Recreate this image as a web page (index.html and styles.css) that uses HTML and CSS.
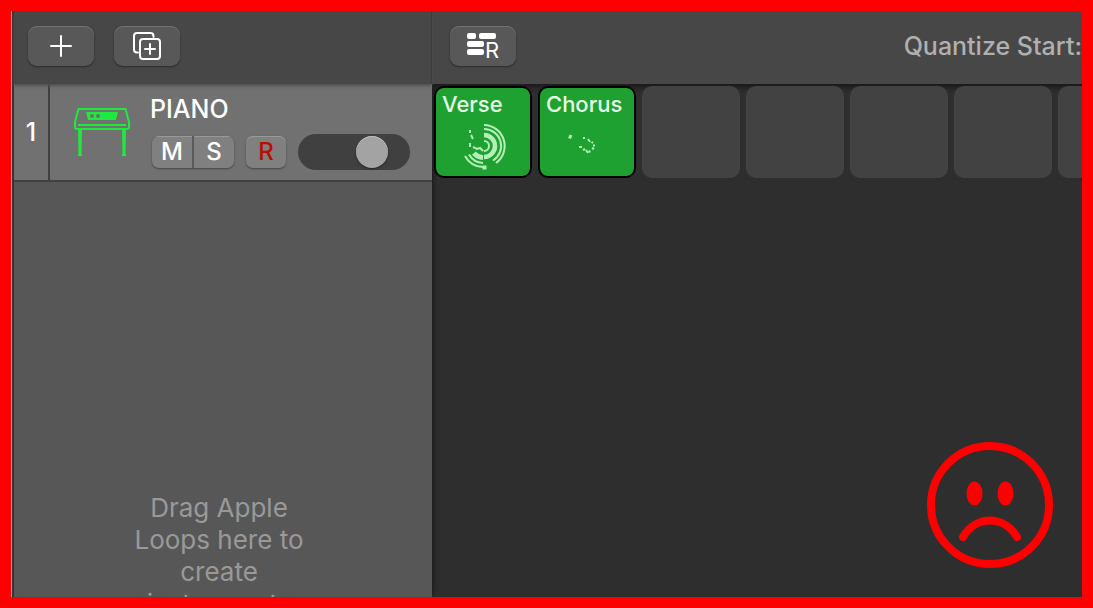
FILE: index.html
```
<!DOCTYPE html>
<html lang="en">
<head>
    <meta charset="UTF-8">
    <meta name="viewport" content="width=device-width, initial-scale=1.0">
    <title>Live Loops</title>
    <link rel="stylesheet" href="styles.css">
</head>
<body>

<div class="window">
    <aside class="tracks">
        <div class="toolbar">
            <button type="button" class="tool" aria-label="Add track">
                <svg width="22" height="22" viewBox="0 0 22 22" fill="none" stroke="#fff" stroke-width="2" stroke-linecap="round">
                    <path d="M11 1v20M1 11h20"/>
                </svg>
            </button>
            <button type="button" class="tool" aria-label="Duplicate track">
                <svg width="28" height="28" viewBox="0 0 28 28" fill="none" stroke="#fff" stroke-width="2" stroke-linecap="round">
                    <path d="M5 20.500H4a3 3 0 0 1-3-3V4a3 3 0 0 1 3-3h13.500a3 3 0 0 1 3 3v1"/>
                    <rect x="7" y="7" width="20" height="20" rx="3"/>
                    <path d="M17 12v10M12 17h10"/>
                </svg>
            </button>
        </div>

        <div class="track">
            <div class="track-number">1</div>
            <svg class="track-icon" width="56" height="48" viewBox="0 0 56 48">
                <path d="M4.500 1h47l3.500 13v5q0 2-2 2H3q-2 0-2-2v-5z" fill="none" stroke="#1fe83f" stroke-width="2" stroke-linejoin="round"/>
                <path d="M12 4h32l-2 8H14z" fill="#1fe83f"/>
                <circle cx="18" cy="8" r="2" fill="#6f6f6f"/>
                <circle cx="24" cy="8" r="2" fill="#6f6f6f"/>
                <path d="M4 16h48v2H4zM4 21h4l-.5 25H8v2H4v-2h.5zM48 21h4l-.5 25h.5v2h-4v-2h.5z" fill="#1fe83f"/>
            </svg>
            <div class="track-body">
                <div class="track-name">PIANO</div>
                <div class="track-controls">
                    <div class="pair">
                        <button type="button" class="small" aria-label="Mute">M</button>
                        <button type="button" class="small" aria-label="Solo">S</button>
                    </div>
                    <button type="button" class="small record" aria-label="Record enable">R</button>
                    <input type="range" class="volume" min="0" max="100" value="73" aria-label="Volume">
                </div>
            </div>
        </div>

        <p class="hint">Drag Apple Loops here to create instruments</p>
    </aside>

    <main class="loops">
        <div class="toolbar">
            <button type="button" class="tool" aria-label="Record performance">
                <svg class="tool-record" width="36" height="32" viewBox="0 0 36 32" fill="#fff">
                    <rect x="2" y="3" width="9" height="6" rx="2"/>
                    <rect x="14" y="3" width="17" height="6" rx="2"/>
                    <rect x="2" y="11" width="17" height="6" rx="2"/>
                    <rect x="2" y="19" width="17" height="6" rx="2"/>
                    <text class="tool-letter" x="20" y="28">R</text>
                </svg>
            </button>
            <span class="quantize">Quantize Start:</span>
        </div>

        <div class="cells">
            <button type="button" class="cell filled">
                <span>Verse</span>
                <svg width="48" height="48" viewBox="0 0 48 48" fill="none" stroke="#b5efb8" stroke-width="2">
                    <path d="M25 3a21 21 0 0 1 12 38"/>
                    <path d="M25 7a17 17 0 0 1 9 31.500"/>
                    <path d="M25 19a5 5 0 0 1 0 10"/>
                    <path d="M25 13a11 11 0 0 1 0 22" stroke-width="4.500"/>
                    <path d="M24 35.500A12 12 0 0 1 15 31" stroke-width="5"/>
                    <path d="M24 41A17 17 0 0 1 10 32.500"/>
                    <path d="M24 45A21 21 0 0 1 6 34"/>
                    <path d="M25.500 43.500v4" stroke-width="4"/>
                    <path d="M11 8v3M12 13l2 4M11 21v4M14 25l4 2 3-1 3 3"/>
                </svg>
            </button>
            <button type="button" class="cell filled">
                <span>Chorus</span>
                <svg width="48" height="48" viewBox="0 0 48 48" fill="none" stroke="#b5efb8" stroke-width="2">
                    <path d="M6.500 16.500l1.500-3.500" stroke-width="3"/>
                    <path d="M20 16h2M25 17l2 3M28.500 21l1.500-1M30 23.500h2M29 26l2 1M26 28.500l1 2M23 28l2 3M20 28l2-1M16 25h3"/>
                </svg>
            </button>
            <div class="cell"></div>
            <div class="cell"></div>
            <div class="cell"></div>
            <div class="cell"></div>
            <div class="cell"></div>
        </div>
    </main>

    <svg class="sad-face" width="126" height="126" viewBox="0 0 126 126" fill="none" stroke="#f00" stroke-width="8" stroke-linecap="round">
        <circle cx="63" cy="63" r="59"/>
        <path d="M36 95c13-22 41-22 54 0"/>
        <ellipse cx="47.500" cy="51.500" rx="8" ry="12" fill="#f00" stroke="none"/>
        <ellipse cx="78.500" cy="51.500" rx="8" ry="12" fill="#f00" stroke="none"/>
    </svg>
</div>

</body>
</html>
```
FILE: styles.css
```
* {
    box-sizing: border-box;
}

body {
    margin: 0;
    font-family: Inter, "Liberation Sans", sans-serif;
    font-weight: 500;
    color: #fff;
}

button {
    font: inherit;
    color: inherit;
    border: none;
    padding: 0;
    cursor: pointer;
}

.window {
    position: relative;
    display: flex;
    height: 100vh;
    border: 11px solid #f00;
    background-color: #2e2e2e;
    overflow: hidden;
}

/* left side */
.tracks {
    display: flex;
    flex-direction: column;
    flex: 0 0 421px;
    border-left: 1px solid #8fa9d0;
    background-color: #575757;
    box-shadow: inset 2px 0 0 #353535, 0 0 6px #111;
}

.toolbar {
    display: flex;
    align-items: center;
    gap: 20px;
    flex: 0 0 73px;
    padding-left: 16px;
    padding-bottom: 3px;
    background-color: #474747;
    white-space: nowrap;
}

.tracks .toolbar {
    position: relative;
    margin-left: 2px;
    padding-left: 14px;
    border-right: 1px solid #3d3d3d;
    box-shadow: 0 2px 3px #4f4f4f;
}

.tool {
    display: flex;
    align-items: center;
    justify-content: center;
    width: 66px;
    height: 40px;
    border-radius: 9px;
    background-color: #585858;
    box-shadow: inset 0 1px 0 #727272, 0 1px 2px #2b2b2b;
}

.tool-record {
    overflow: visible;
}

.tool-letter {
    font-size: 22px;
    font-weight: 400;
}

.track {
    display: flex;
    flex: none;
    margin-left: 2px;
    height: 98px;
    border-bottom: 2px solid #404040;
    background-color: #717171;
}

.track-number {
    display: flex;
    align-items: center;
    justify-content: center;
    width: 36px;
    border-right: 2px solid #404040;
    font-size: 25px;
}

.track-icon {
    margin: 24px 20px 0 24px;
}

.track-body {
    padding-top: 9px;
}

.track-name {
    font-size: 25px;
    line-height: 32px;
}

.track-controls {
    display: flex;
    align-items: center;
    gap: 12px;
    margin-top: 9px;
    margin-left: 2px;
}

.pair {
    display: flex;
    gap: 2px;
    border-radius: 7px;
    background-color: #5b5b5b;
    overflow: hidden;
    box-shadow: 0 1px 2px #444;
}

.small {
    width: 40px;
    height: 32px;
    background-color: #808080;
    box-shadow: inset 0 1px 0 #999;
    font-size: 24px;
    line-height: 32px;
}

.record {
    border-radius: 7px;
    box-shadow: inset 0 1px 0 #999, 0 1px 2px #444;
    color: #b80f00;
}

.volume {
    appearance: none;
    width: 112px;
    height: 36px;
    margin: 0;
    border-radius: 18px;
    background-color: #404040;
}

.volume::-webkit-slider-thumb {
    appearance: none;
    width: 32px;
    height: 32px;
    border-radius: 50%;
    background-color: #a3a3a3;
    box-shadow: inset 0 1px 0 #bbb, 0 1px 2px #222;
}

.hint {
    width: 186px;
    margin: 51vh auto 0;
    padding-right: 6px;
    color: #999;
    font-size: 26px;
    font-weight: 400;
    line-height: 32px;
    text-align: center;
}

/* right side */
.loops {
    display: flex;
    flex-direction: column;
    flex: 1;
    min-width: 0;
    overflow: hidden;
}

.loops .toolbar {
    padding-left: 18px;
}

.quantize {
    margin-left: auto;
    color: #b0b0b0;
    font-size: 25px;
}

.cells {
    display: flex;
    gap: 6px;
    padding: 2px;
    box-shadow: inset 0 4px 4px #1c1c1c;
}

.cell {
    flex: 0 0 98px;
    height: 92px;
    border-radius: 10px;
    background-color: #424242;
}

.filled {
    display: flex;
    flex-direction: column;
    border: 2px solid #000;
    background-color: #1fa131;
    color: #e6ffe6;
    font-size: 22px;
    line-height: 32px;
    text-align: left;
}

.filled span {
    padding-left: 6px;
}

.filled svg {
    align-self: center;
    margin-top: 2px;
}

/* lies over the grid */
.sad-face {
    position: absolute;
    right: 29px;
    bottom: 29px;
}
```
